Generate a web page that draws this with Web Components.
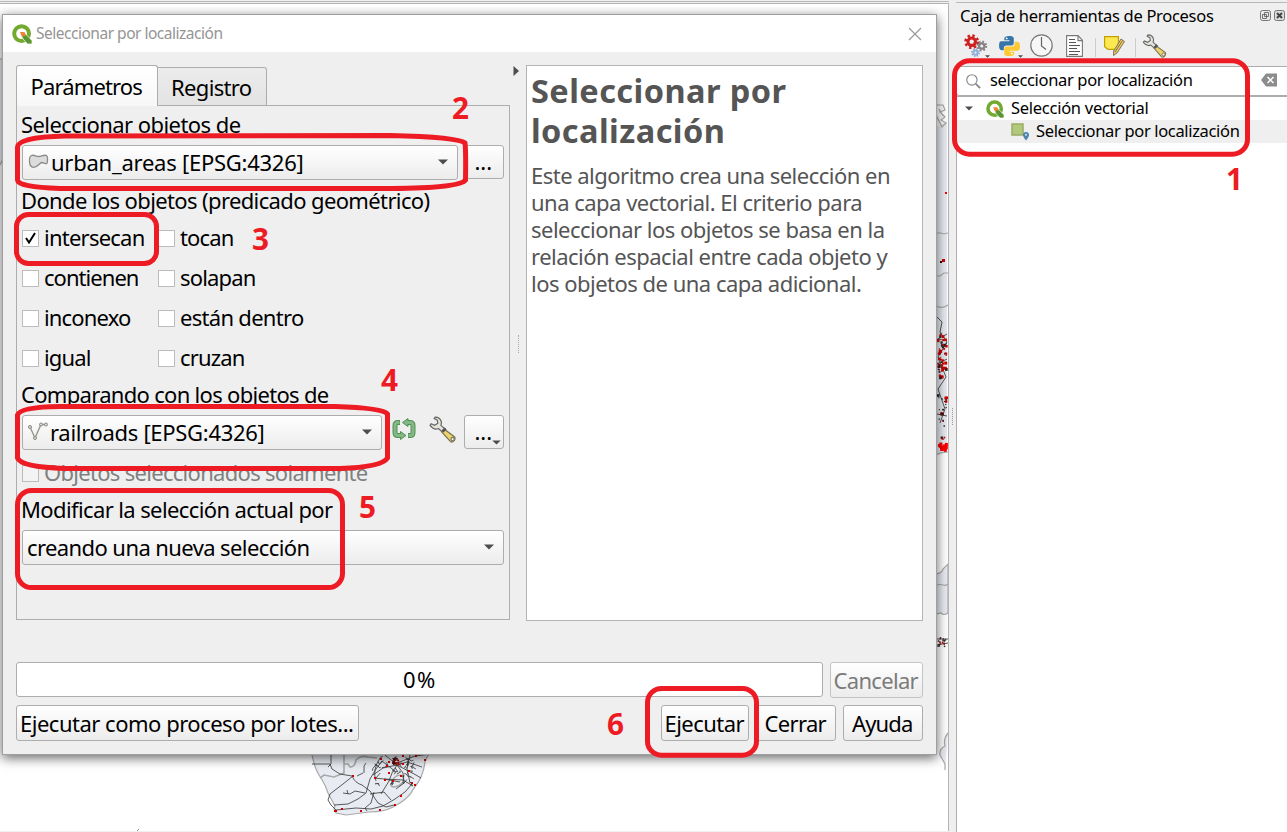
<!DOCTYPE html>
<html lang="es"><head><meta charset="utf-8"><title>Seleccionar por localización</title>
<style>
html,body{margin:0;height:832px;overflow:hidden;background:#efefef}
body{font:22px/28px "Noto Sans","Open Sans",sans-serif;color:#000}
</style></head><body><gis-desktop></gis-desktop>
<script>
const define=(name,html,setup)=>customElements.define(name,class extends HTMLElement{
  connectedCallback(){
    if(this.shadowRoot)return;
    const t=document.createElement('template');
    t.innerHTML=typeof html==='function'?html(this):html;
    this.attachShadow({mode:'open'}).append(t.content.cloneNode(true));
    if(setup)setup(this);
  }
});

/* Text run tracked to an exact advance width; "n" gives the character count of the widest line */
define('ui-text','<style>:host{display:block;white-space:nowrap;flex:none}span{display:inline-block;vertical-align:top;margin:var(--nudge-y,0) 0 0 var(--nudge-x,0)}</style><span><slot></slot></span>',el=>{
  const s=el.shadowRoot.querySelector('span'),w=+el.getAttribute('w');
  if(w){const n=+el.getAttribute('n')||el.textContent.length,d=(w+.5-s.getBoundingClientRect().width)/n;s.style.letterSpacing=d+'px';el.style.width=w+'px';}
});

const icons={
q:`<svg viewBox="0 0 20 20"><circle cx="9.6" cy="9.6" r="7.4" fill="none" stroke="#74a92f" stroke-width="4"/><path d="M9.5 9l3 0 7.5 7.500V20h-4.500l-4.500-5z" fill="#589632" stroke="#fff" stroke-width=".7"/><path d="M8 8h4.500l1.500 4-3-.5-.5 3z" fill="#ee8434"/></svg>`,
poly:`<svg viewBox="0 0 20 15"><path d="M3 1.500C6 .5 7 2.500 10 2.500S15 .5 18 1.500c1.500 1 1.200 6 .3 8-1 1-3-1-5-1s-4 5-8.300 4.800C0 13 0 3 3 1.500z" fill="#dcdcdc" stroke="#8a8a8a" stroke-width="1.300"/></svg>`,
line:`<svg viewBox="0 0 20 19"><path d="M2 5l5 11L13 2.500h5" fill="none" stroke="#909088" stroke-width="1.300"/><g fill="#ddd" stroke="#888880"><circle cx="2" cy="5" r="1.500"/><circle cx="7" cy="16" r="1.500"/><circle cx="13" cy="2.500" r="1.500"/><circle cx="18" cy="2.500" r="1.500"/></g></svg>`,
down:`<svg viewBox="0 0 10 6"><path d="M0 .5h10L5 5.500z" fill="#4d4d4d"/></svg>`,
loop:`<svg viewBox="0 0 24 22"><g fill="none" stroke="#4f9153" stroke-width="5"><path d="M9 17.500H6q-3 0-3-3v-7q0-3 3-3h2"/><path d="M15 4.500h3q3 0 3 3v7q0 3-3 3h-2"/></g><path d="M16 .5v8L10.500 4.500zM8.500 13.500v8l5.500-4z" fill="#83b886" stroke="#4f9153"/><g fill="none" stroke="#83b886" stroke-width="3"><path d="M9 17.500H6q-3 0-3-3v-7q0-3 3-3h1.500"/><path d="M15 4.500h3q3 0 3 3v7q0 3-3 3h-1.500"/></g></svg>`,
wrench:`<svg viewBox="0 0 26 26"><path d="M6 1q5 0 6 5l-.5 3 4 3.500-2.500 3L9 12q-4 2-8-3l1-1.500 3.500 1.500L8.500 7 8 4 5 2.500z" fill="#e5e5df" stroke="#686864" stroke-width="1.200"/><path d="M14.500 12.500l10 7.500q1.500 1.500-.5 4-2 2-3.500.5l-8-9z" fill="#ebd26b" stroke="#77704f" stroke-width="1.100"/><path d="M12 14l3-3 2 2-3 3z" fill="#555"/><circle cx="22.700" cy="22.200" r="1.600" fill="#eee" stroke="#776"/></svg>`,
gears:`<svg viewBox="0 0 25 24"><g fill="none"><circle cx="8" cy="8" r="6" stroke="#cf2020" stroke-width="3.500" stroke-dasharray="2.350 2.350"/><circle cx="8" cy="8" r="3.900" stroke="#cf2020" stroke-width="3.200"/><circle cx="18.500" cy="12.500" r="4.500" stroke="#858585" stroke-width="2.400" stroke-dasharray="1.770 1.770"/><circle cx="18.500" cy="12.500" r="2.800" stroke="#858585" stroke-width="2.400"/><circle cx="12" cy="19.500" r="3.700" stroke="#8eaedb" stroke-width="2" stroke-dasharray="1.450 1.450"/><circle cx="12" cy="19.500" r="2.200" stroke="#8eaedb" stroke-width="2"/></g></svg>`,
python:`<svg viewBox="0 0 22 21"><path d="M10.500 0C15 0 15.500 1.500 15.500 3v4.500q0 2.500-2.500 2.500H8q-3 0-3 3v2H3q-3 0-3-5t3-4.500h8V4.500H5.500V3q0-3 5-3z" fill="#3775a9"/><path d="M10.500 21c-4.500 0-5-1.500-5-3v-4.500Q5.500 11 8 11h5.500q3 0 3-3V6h2.500q3 0 3 5t-3 4.500h-8v1h5V18q0 3-5.500 3z" fill="#fcc932"/><circle cx="8" cy="2.500" r="1" fill="#fff"/><circle cx="13.500" cy="18.500" r="1" fill="#fff"/></svg>`,
clock:`<svg viewBox="0 0 23 23"><circle cx="11.500" cy="11.500" r="10.700" fill="#f7f7f7" stroke="#777" stroke-width="1.200"/><path d="M11.500 3v9l4.500 3.500" fill="none" stroke="#666" stroke-width="1.200"/></svg>`,
doc:`<svg viewBox="0 0 17 22"><path d="M.6.6H12l4.400 4.500v16.300H.6zM12 .6v5h4.400" fill="#fff" stroke="#777" stroke-width="1.100"/><path d="M3 4.500h6M3 7.500h7M3 10.500h11M3 13.500h8M3 16.500h11M3 19.500h9" stroke="#555" fill="none"/></svg>`,
edit:`<svg viewBox="0 0 21 21"><path d="M.6 1.600h13.800v12.800H4L.6 11.800z" fill="#fce94f" stroke="#c4a000" stroke-width="1.200"/><path d="M17 4l3.500 2.500-7.500 11.500-3.500 2.500.2-4.500z" fill="#ecc95c" stroke="#78746a"/><path d="M18.500 5.500l-7.500 11.500" stroke="#887530"/></svg>`,
search:`<svg viewBox="0 0 16 16"><circle cx="6.300" cy="6.300" r="5.500" fill="none" stroke="#888" stroke-width="1.200"/><path d="M10.500 10.500l4.500 4.500" stroke="#888" stroke-width="2"/></svg>`,
clear:`<svg viewBox="0 0 16 14"><path d="M0 7l5-6.500h11v13H5z" fill="#8c8c8c"/><path d="M6.500 4l6 6m0-6l-6 6" stroke="#fff" stroke-width="1.500"/></svg>`,
select:`<svg viewBox="0 0 19 18"><path d="M1 1h11v11H1z" fill="#b2c87c" stroke="#98ad63" stroke-width="1.500"/><path d="M15 17.500q-3-4-3-5.500a3 3 0 0 1 6 0q0 1.500-3 5.500z" fill="#4b83ae"/><circle cx="15" cy="11.800" r="1" fill="#dce8f0"/></svg>`,
close:`<svg viewBox="0 0 14 14"><path d="M1 1l12 12M13 1L1 13" stroke="#999" stroke-width="1.200"/></svg>`,
undock:`<svg viewBox="0 0 11 11"><rect x=".5" y=".5" width="10" height="10" rx="2" fill="#e8e8e8" stroke="#777"/><path d="M4.500 2.500h4v4h-4zM2.500 4.500h4v4h-4z" fill="none" stroke="#555" stroke-width=".8"/></svg>`,
shut:`<svg viewBox="0 0 11 11"><rect x=".5" y=".5" width="10" height="10" rx="2" fill="#ddd" stroke="#777"/><path d="M3 3l5 5m0-5L3 8" stroke="#444" stroke-width="2"/></svg>`,
check:`<svg viewBox="0 0 11 12"><path d="M1 6l3 4.500L10 1" fill="none" stroke="#000" stroke-width="2"/></svg>`,
right:`<svg viewBox="0 0 6 10"><path d="M.5 0v10L6 5z" fill="#4d4d4d"/></svg>`
};
define('ui-icon',el=>`<style>:host{display:block;flex:none;width:${el.getAttribute('w')}px;height:${el.getAttribute('h')}px}svg{display:block;width:100%;height:100%}</style>${icons[el.getAttribute('name')]}`);

define('ui-button',`<style>:host{display:flex;box-sizing:border-box;justify-content:center;align-items:center;height:36px;flex:none;border:1px solid #adadad;border-radius:3px;background:linear-gradient(#fff,#ececec)}
:host([disabled]){color:#7b7b7b;border-color:#c4c4c4}:host([tool]){height:34px;width:40px;position:relative}::slotted(ui-icon){position:absolute;right:2px;bottom:3px}</style><slot></slot>`);

define('ui-combo',`<style>:host{display:flex;box-sizing:border-box;align-items:center;height:35px;border:1px solid #adadad;border-radius:3px;background:linear-gradient(#fff,#ececec);padding:0 9px 0 5px}
.v{flex:1;display:flex;gap:3px}ui-icon{margin-top:-1px}</style><div class="v"><slot></slot></div><ui-icon name="down" w="10" h="6"></ui-icon>`);

define('ui-check',el=>`<style>:host{display:flex;align-items:center;height:28px;gap:6px}
i{box-sizing:border-box;width:17px;height:17px;border:1px solid #bcbcbc;background:#fff;display:grid;place-items:center;flex:none}
:host([disabled]){color:#808080}:host([disabled]) i{background:#f3f3f3}</style><i>${el.hasAttribute('checked')?'<ui-icon name="check" w="11" h="12"></ui-icon>':''}</i><slot></slot>`);

define('param-form',`<style>:host{display:block;width:494px}
.tabs{display:flex;height:41px;align-items:flex-end}
.tabs div{box-sizing:border-box;display:flex;justify-content:center;border:1px solid #adadad}
.a{width:142px;height:41px;background:linear-gradient(#fff,#f7f7f7);border-bottom:0!important;border-radius:3px 3px 0 0;padding-top:7px;z-index:1}
.b{width:109px;height:39px;background:linear-gradient(#ececec,#e3e3e3);border-left:0!important;border-radius:0 3px 0 0;padding-top:6px}
.pane{box-sizing:border-box;height:515px;margin-top:-1px;border:1px solid #adadad;padding:6px 5px 0;display:flex;flex-direction:column}
.row{display:flex}.checks{display:grid;grid-template-columns:136px 1fr;row-gap:12px;margin-top:9px}
ui-combo{flex:1}.tools{display:flex;gap:13px;margin:1px 8px 0 10px}
</style>
<div class="tabs"><div class="a"><ui-text w="111">Parámetros</ui-text></div><div class="b"><ui-text w="80">Registro</ui-text></div></div>
<div class="pane">
<ui-text w="219" style="margin-top:-1px">Seleccionar objetos de</ui-text>
<div class="row" style="margin-top:6px;gap:6px"><ui-combo><ui-icon name="poly" w="21" h="15" style="margin-top:5px"></ui-icon><ui-text w="252">urban_areas [EPSG:4326]</ui-text></ui-combo><ui-button tool><ui-text w="17">...</ui-text></ui-button></div>
<ui-text w="408" style="margin-top:7px">Donde los objetos (predicado geométrico)</ui-text>
<div class="checks">
<ui-check checked><ui-text w="100">intersecan</ui-text></ui-check><ui-check><ui-text w="53">tocan</ui-text></ui-check>
<ui-check><ui-text w="94">contienen</ui-text></ui-check><ui-check><ui-text w="75">solapan</ui-text></ui-check>
<ui-check><ui-text w="86">inconexo</ui-text></ui-check><ui-check><ui-text w="123">están dentro</ui-text></ui-check>
<ui-check><ui-text w="46">igual</ui-text></ui-check><ui-check><ui-text w="64">cruzan</ui-text></ui-check></div>
<ui-text w="307" style="margin-top:9px">Comparando con los objetos de</ui-text>
<div class="row" style="margin-top:6px"><ui-combo><ui-icon name="line" w="20" h="19" style="margin-top:3px"></ui-icon><ui-text w="214">railroads [EPSG:4326]</ui-text></ui-combo><div class="tools"><ui-icon name="loop" w="24" h="22" style="margin-top:2px"></ui-icon><ui-icon name="wrench" w="27" h="27"></ui-icon></div><ui-button tool><ui-text w="17">...</ui-text><ui-icon name="down" w="9" h="5"></ui-icon></ui-button></div>
<ui-check disabled style="margin-top:9px"><ui-text w="323">Objetos seleccionados solamente</ui-text></ui-check>
<ui-text w="311" style="margin-top:9px">Modificar la selección actual por</ui-text>
<ui-combo style="margin-top:6px;flex:none"><ui-text w="282">creando una nueva selección</ui-text></ui-combo>
</div>`);

define('help-pane',`<style>:host{display:block;box-sizing:border-box;width:397px;height:556px;border:1px solid #b4b4b4;background:#fff;padding:5px 4px;color:#555;line-height:27px;--nudge-x:0px;--nudge-y:0px}
h1{margin:0 0 11px;font-size:32.500px;line-height:40px}</style>
<h1><ui-text w="255" n="15">Seleccionar por<br>localización</ui-text></h1>
<ui-text w="358" n="37">Este algoritmo crea una selección en<br>una capa vectorial. El criterio para<br>seleccionar los objetos se basa en la<br>relación espacial entre cada objeto y<br>los objetos de una capa adicional.</ui-text>`);

define('tool-dialog',`<style>:host{display:flex;flex-direction:column;box-sizing:border-box;width:935px;height:741px;border:1px solid #9f9f9f;background:#efefef;box-shadow:0 3px 11px #0009;--nudge-x:-1px;--nudge-y:-1px}
header{height:37px;background:#fff;display:flex;align-items:center;padding:0 14px 0 9px;gap:5px;font-size:15.500px;color:#959595}
main{display:flex;height:556px;padding:13px 13px 0}
.split{width:16px;display:flex;flex-direction:column;align-items:center;justify-content:space-between}
.dots{height:18px;margin-bottom:268px;border-left:1px dotted #aaa}
.prog{display:flex;gap:7px;padding:41px 13px 0}.bar{box-sizing:border-box;width:807px;height:35px;border:1px solid #adadad;border-radius:3px;background:#fff;display:flex;align-items:center;justify-content:center;--nudge-x:0px}
footer{display:flex;gap:7px;padding:7px 13px 0;--nudge-y:0px}.sp{flex:1}</style>
<header><ui-icon name="q" w="20" h="20"></ui-icon><ui-text w="186">Seleccionar por localización</ui-text><ui-icon name="close" w="14" h="14" style="margin-left:auto"></ui-icon></header>
<main><param-form></param-form><div class="split"><ui-icon name="right" w="6" h="10" style="margin:1px 5px 0 0"></ui-icon><div class="dots"></div></div><help-pane></help-pane></main>
<div class="prog"><div class="bar"><ui-text w="33">0%</ui-text></div><ui-button disabled style="width:93px;--nudge-y:0px"><ui-text w="84">Cancelar</ui-text></ui-button></div>
<footer><ui-button style="width:343px"><ui-text w="333">Ejecutar como proceso por lotes...</ui-text></ui-button><div class="sp"></div><ui-button style="width:88px"><ui-text w="79">Ejecutar</ui-text></ui-button><ui-button style="width:80px"><ui-text w="61">Cerrar</ui-text></ui-button><ui-button style="width:80px"><ui-text w="60">Ayuda</ui-text></ui-button></footer>`);

define('toolbox-panel',`<style>:host{display:flex;flex-direction:column;box-sizing:border-box;width:331px;height:832px;font-size:16.500px;line-height:23px;padding-top:2px;--nudge-y:-2px}
.cap{border-top:1px solid #b8b8b8;height:25px;display:flex;align-items:center;padding:0 2px 0 4px;gap:3px;--nudge-y:0px}.cap ui-text{margin-right:auto}
.tb{height:38px;display:flex;padding-left:8px;align-items:center}.tb ui-icon{margin-top:-3px}.tb i{width:1px;height:19px;background:#ccc}
.s{box-sizing:border-box;height:30px;border:1px solid #adadad;border-right:0;border-radius:3px 0 0 3px;background:#fff;display:flex;align-items:center;padding:0 10px 0 9px;gap:9px}
.tree{flex:1;box-sizing:border-box;border:1px solid #adadad;border-width:1px 0 0 1px;background:#fff;--nudge-y:-1px}
.r{height:23px;display:flex;align-items:center;gap:5px}</style>
<div class="cap"><ui-text w="253">Caja de herramientas de Procesos</ui-text><ui-icon name="undock" w="11" h="11"></ui-icon><ui-icon name="shut" w="11" h="11"></ui-icon></div>
<div class="tb"><ui-icon name="gears" w="24" h="23"></ui-icon><ui-icon name="down" w="5" h="3" style="margin:19px 0 0 -3px"></ui-icon><ui-icon name="python" w="21" h="20" style="margin-left:9px"></ui-icon><ui-icon name="down" w="5" h="3" style="margin:19px 0 0 -2px"></ui-icon><ui-icon name="clock" w="23" h="23" style="margin-left:7px"></ui-icon><ui-icon name="doc" w="17" h="22" style="margin-left:13px"></ui-icon><i style="margin-left:12px"></i><ui-icon name="edit" w="21" h="21" style="margin-left:8px"></ui-icon><i style="margin-left:10px"></i><ui-icon name="wrench" w="25" h="24" style="margin-left:6px"></ui-icon></div>
<div class="s"><ui-icon name="search" w="15" h="15"></ui-icon><ui-text w="202">seleccionar por localización</ui-text><ui-icon name="clear" w="16" h="14" style="margin-left:auto;margin-top:-2px"></ui-icon></div>
<div class="tree"><div class="r" style="padding-left:8px"><ui-icon name="down" w="8" h="5"></ui-icon><ui-icon name="q" w="18" h="18" style="margin:0 2px 0 8px"></ui-icon><ui-text w="137">Selección vectorial</ui-text></div><div class="r" style="background:#efefef;padding-left:54px;gap:6px"><ui-icon name="select" w="19" h="18"></ui-icon><ui-text w="203">Seleccionar por localización</ui-text></div></div>`);

define('map-canvas',()=>{
  let seed=5;const rnd=()=>(seed=(seed*16807)%2147483647)/2147483647;
  let dots='';
  const dot=(x,y,s=2,c='#d40000')=>dots+=`<rect x="${x.toFixed(1)}" y="${y.toFixed(1)}" width="${s}" height="${s}" fill="${c}"/>`;
  [[352,776],[380,759],[388,762],[402,756],[415,756],[424,760],[386,766],[388,773],[384,780],[392,781],[400,776],[408,771],[411,783],[414,785],[374,778],[400,796],[394,805],[379,810],[360,811],[341,809],[334,811],[335,811],[432,754],[402,764]].forEach(p=>dot(...p));
  for(let i=0;i<20;i++)dot(392+rnd()*6,758+rnd()*8,1.7,i%2?'#a00':'#411');
  for(let i=0;i<62;i++)dot(937+rnd()*9,333+rnd()*47,1+rnd()*2,i%3?'#d40000':'#222');
  for(let i=0;i<25;i++)dot(937+rnd()*9,395+rnd()*45,1+rnd()*1.800,i%3?'#222':'#c00');
  for(let i=0;i<22;i++)dot(937+rnd()*8,443+rnd()*7,3,'#f00');
  for(let i=0;i<18;i++)dot(937+rnd()*9,638+rnd()*9,1.500,i%3?'#333':'#c00');
  dot(945,193,2,'#f00');dot(942,260,3,'#c00');dot(940,262,2,'#300');
  let rails='';for(let i=0;i<34;i++){const x=376+rnd()*40,y=757+rnd()*30;rails+=`M${x.toFixed(1)} ${y.toFixed(1)}l${(rnd()*10-5).toFixed(1)} ${(rnd()*8-3).toFixed(1)}l${(rnd()*6-3).toFixed(1)} ${(rnd()*6-3).toFixed(1)}`;}
  return `<style>:host{display:block;box-sizing:border-box;height:828px;width:949px;border:solid #b4b4b4;border-width:1px 1px 0 0;background:#fff}svg{display:block}</style>
<svg width="948" height="827" viewBox="0 5 948 827"><g stroke="#a9a9a9" fill="#e8ebf1" stroke-width="1.200">
<path d="M-2 60H3V160l-3 6h-3z"/><path d="M936 128l11-6V453l-4 1-3 2-4-1z" stroke="none"/>
<path d="M936 106l7 0 2 5-5 2 5 5-4 3 5 3-4 4-6-12m3-6l4 7" fill="none"/>
<path d="M936 307q6 3 12-1M936 234l5 0 3 1 4-1M936 277l4 0 4-3h4M936 456l4-2 8-1" fill="none"/>
<path d="M936 575q6-1 7-5l5-5v49q-4 3-7 0l-5 1z"/><path d="M936 586q5-1 7 0t5-1" fill="none"/>
<path d="M948 734q-5 6-3 13-6 3-5 9l5 9v6" />
<path d="M311 750q3 20 10 29 5 8 7 15l7 13q-2 4 1 7l10 2 23-3q15 0 24-5 16-8 21-19 9-10 11-26l3-7 8-6z"/>
<path d="M344 755v19l-10 4-10-2-4 3M344 765h4l2 3q5 0 6-7 5-5 12-3l9 1M394 779q5-5 9-1 2 5-3 8-8 4-9 0z" fill="none" stroke-width="1.600"/></g>
<g fill="none" stroke="#333" stroke-width=".8"><path d="M312 765h18l2 5 8 5 12 2q3 7 10 9l8 6q4 6 8 12l8 4 8-2M353 777l-10 8-13 10-2 6 3 5 5 5M334 806l14-1 10-5 8-6 4-14 6-10 6-8 5 4 8 6M384 780l19 1 10 6M374 793l-3 11-6 5 2 3M370 795l14-2 7 8M374 779l10 1 16 3M397 766l-5 8-3 8-8 13M397 766l19 10 5 3M397 766l6 8 1 10-8 6M397 766l-14 3-10 7M397 766l10-3 15 5M343 794l7 1 5-3 10 2M348 795l-1-4M364 774v-7l2-3M363 774l-6 3M385 756l6 5 6 3 18-7 15-2M331 753v12l-3 3M410 756l-3 14 3 14M380 759q-8 12-4 23M336 811l20-2 15 1 12-3 12-7 10-7 7-8"/><path d="${rails}"/></g>
<path d="M937 318l5 5-2 10 7 10-9 15 8 20-8 12 7 20-5 14M947 335l-9 5 9 2M937 365l10-5M937 415l10 2M937 640h11m-11 6l11-2" stroke="#555" fill="none"/>${dots}
<path d="M137 832l2-2" stroke="#999"/></svg>`;
});

define('mark-up',()=>{
  const nums=[[1,1226,190],[2,452,119],[3,252,250],[4,381,391],[5,359,518],[6,607,735]];
  return `<style>:host{display:block;position:absolute;inset:0;pointer-events:none}svg{display:block}text{font:bold 31px "Open Sans","Noto Sans",sans-serif;fill:#ed1c24}</style>
<svg width="1287" height="832"><g fill="none" stroke="#ed1c24" stroke-width="5">
<rect x="954.500" y="60.700" width="293" height="93.500" rx="15"/>
<path d="M17.500 147Q18 137 65 136L390 135.500Q458 137 465 143Q466 150 465.500 180Q460 188 391 188.500H60Q18 187 17.500 180Z"/>
<rect x="16.500" y="214.500" width="140" height="49" rx="12"/>
<path d="M17.500 415Q20 407 60 406.500H335Q383 408 387.500 414V458Q382 467 340 468.500H65Q21 467 17.500 458Z"/>
<rect x="17.500" y="490.500" width="325" height="97" rx="14"/><rect x="647.500" y="688.500" width="109" height="66.700" rx="14"/></g>
${nums.map(([n,x,y])=>`<text x="${x}" y="${y}" textLength="17" lengthAdjust="spacingAndGlyphs">${n}</text>`).join('')}</svg>`;
});

define('gis-desktop',`<style>:host{display:flex;justify-content:space-between;position:relative;width:1287px;height:832px;overflow:hidden;background:#efefef}
.left{width:949px;padding-top:1px}.left hr{margin:0 0 1px;border:0;border-top:1px solid #b8b8b8}
.grip{align-self:center;flex:none;height:17px;width:1px;border-left:1px dotted #999}
tool-dialog{position:absolute;left:2px;top:14px}</style>
<div class="left"><hr><map-canvas></map-canvas></div><div class="grip"></div><toolbox-panel></toolbox-panel><tool-dialog></tool-dialog><mark-up></mark-up>`);
</script></body></html>
